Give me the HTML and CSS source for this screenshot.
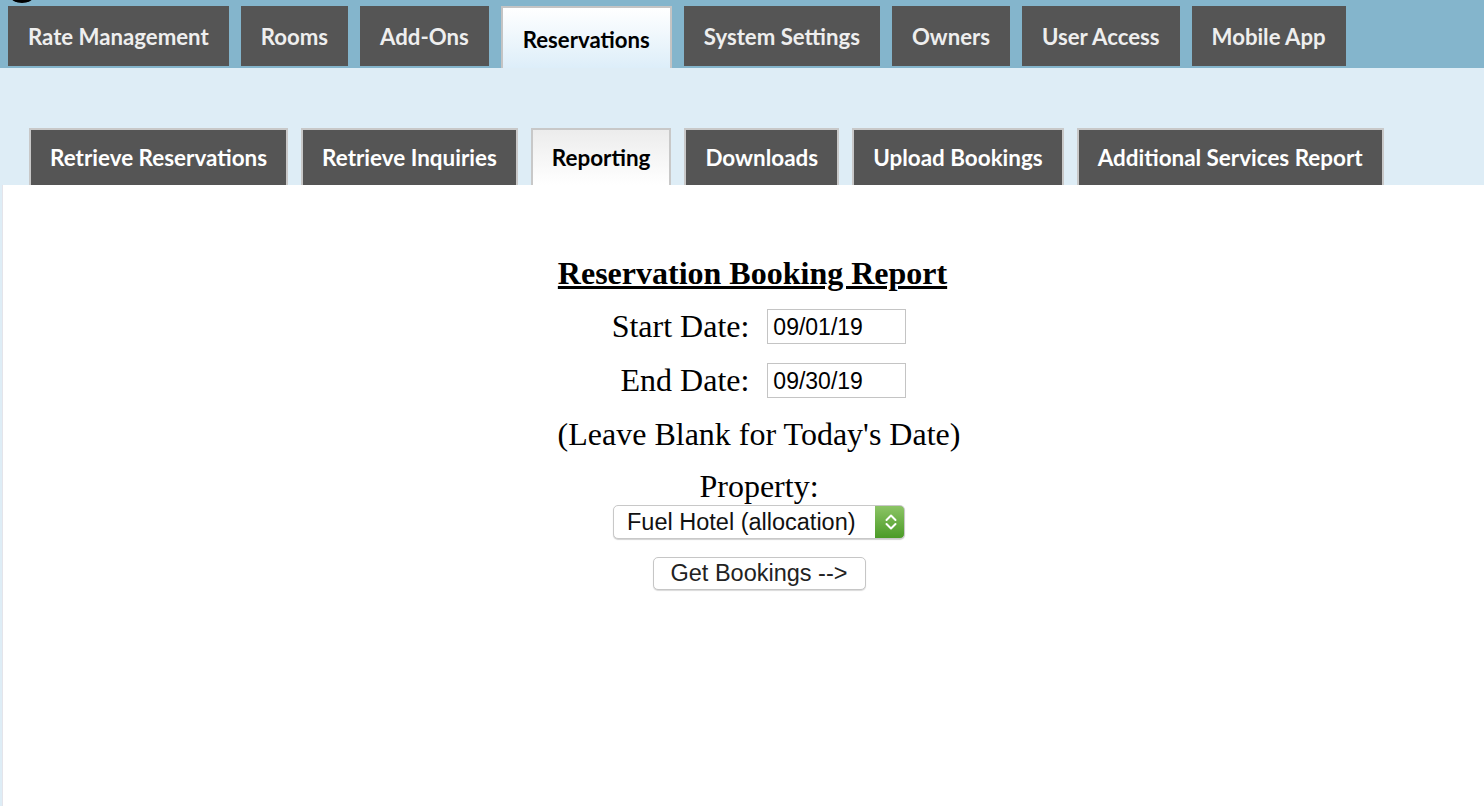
FILE: index.html
```html
<!DOCTYPE html>
<html lang="en">
<head>
    <meta charset="UTF-8">
    <meta name="viewport" content="width=device-width, initial-scale=1.0">
    <title>Reservation Booking Report</title>
    <link rel="stylesheet" href="styles.css">
</head>
<body>
    <div class="topbar">
        <svg class="logo-tail" width="30" height="6" viewBox="0 0 30 6"><ellipse cx="13" cy="-3" rx="11" ry="6" fill="#000"/></svg>
        <a href="#" class="tab">Rate Management</a>
        <a href="#" class="tab">Rooms</a>
        <a href="#" class="tab">Add-Ons</a>
        <a href="#" class="tab active">Reservations</a>
        <a href="#" class="tab">System Settings</a>
        <a href="#" class="tab">Owners</a>
        <a href="#" class="tab">User Access</a>
        <a href="#" class="tab">Mobile App</a>
    </div>

    <div class="subbar">
        <a href="#" class="subtab">Retrieve Reservations</a>
        <a href="#" class="subtab">Retrieve Inquiries</a>
        <a href="#" class="subtab active">Reporting</a>
        <a href="#" class="subtab">Downloads</a>
        <a href="#" class="subtab">Upload Bookings</a>
        <a href="#" class="subtab">Additional Services Report</a>
    </div>

    <div class="content">
        <form class="report">
            <h2 class="report-title">Reservation Booking Report</h2>
            <div class="dates">
                <label for="startDate">Start Date:</label>
                <input type="text" id="startDate" value="09/01/19">
                <label for="endDate">End Date:</label>
                <input type="text" id="endDate" value="09/30/19">
            </div>
            <p class="hint">(Leave Blank for Today's Date)</p>
            <p class="prop-label">Property:</p>
            <span class="select-wrap">
                <select id="property">
                    <option>Fuel Hotel (allocation)</option>
                </select>
                <svg class="select-arrows" width="14" height="22" viewBox="0 0 14 22"><path d="M2.5 9 L7 4.5 L11.5 9 M2.5 13 L7 17.5 L11.5 13" fill="none" stroke="#fff" stroke-width="2" stroke-linecap="round" stroke-linejoin="round"/></svg>
            </span>
            <button type="button" class="get-btn">Get Bookings --&gt;</button>
        </form>
    </div>
</body>
</html>
```

FILE: styles.css
```css
body {
    margin: 0;
    padding: 0;
    background-color: #deedf6;
    font-family: "Liberation Serif", "Times New Roman", serif;
}

a {
    text-decoration: none;
}

/* main tabs */
.topbar {
    position: relative;
    display: flex;
    align-items: flex-start;
    gap: 12px;
    height: 68px;
    padding: 6px 8px 0;
    box-sizing: border-box;
    background-color: #84b5cc;
}

.logo-tail {
    position: absolute;
    top: 0;
    left: 9px;
}

.tab {
    display: flex;
    align-items: center;
    height: 60px;
    padding: 0 20px;
    box-sizing: border-box;
    background-color: #555;
    color: #eee;
    font-family: Lato, "Open Sans", sans-serif;
    font-weight: 700;
    font-size: 22.2px;
}

.tab.active {
    height: 62px;
    border: 2px solid #c4c4c4;
    border-bottom: none;
    padding: 2px 20px 0;
    background: linear-gradient(#ffffff, #ddeef9);
    color: #000;
}

/* sub tabs */
.subbar {
    display: flex;
    align-items: flex-end;
    gap: 13px;
    padding: 60px 0 0 29px;
}

.subtab {
    display: flex;
    align-items: center;
    height: 57px;
    padding: 0 19px;
    box-sizing: border-box;
    border: 2px solid #c8c8c8;
    border-bottom: none;
    background-color: #555;
    color: #fff;
    font-family: Lato, "Open Sans", sans-serif;
    font-weight: 700;
    font-size: 22.45px;
}

.subtab.active {
    background: linear-gradient(#ececec, #ffffff);
    color: #000;
}

/* report form */
.content {
    margin-left: 2px;
    border-left: 1px solid #e4e4ea;
    background-color: #fff;
    min-height: 621px;
    padding: 70px 0 0 31px;
    box-sizing: border-box;
}

.report {
    display: flex;
    flex-direction: column;
    align-items: center;
}

.report-title {
    margin: 0 13px 0 0;
    font-size: 32px;
    line-height: 36px;
    font-weight: 700;
    text-decoration: underline;
}

.dates {
    display: grid;
    grid-template-columns: auto 139px;
    column-gap: 18px;
    row-gap: 19px;
    align-items: center;
    margin-top: 18px;
    font-size: 32px;
    line-height: 35px;
}

.dates label {
    text-align: right;
}

.dates input {
    display: block;
    height: 35px;
    box-sizing: border-box;
    border: 1px solid #c4c4c4;
    padding: 2px 5px 0;
    font-family: "Liberation Sans", Arial, sans-serif;
    font-size: 23px;
    color: #000;
}

.hint, .prop-label {
    margin: 18px 0 0;
    font-size: 32px;
    line-height: 36px;
}

.prop-label {
    margin-top: 16px;
}

.select-wrap {
    position: relative;
    margin-top: 1px;
}

.select-wrap select {
    display: block;
    appearance: none;
    -webkit-appearance: none;
    width: 292px;
    height: 34px;
    padding: 0 0 0 13px;
    border: 1px solid #c8c8c8;
    border-radius: 5px;
    box-shadow: 0 1px 1px rgba(0, 0, 0, 0.18);
    background: linear-gradient(#8cc466, #4b9b27) right / 29px 100% no-repeat, #fff;
    font-family: "Liberation Sans", Arial, sans-serif;
    font-size: 23.5px;
    color: #111;
}

.select-arrows {
    position: absolute;
    right: 7px;
    top: 6px;
    pointer-events: none;
}

.get-btn {
    margin-top: 18px;
    width: 213px;
    height: 33px;
    border: 1px solid #c6c6c6;
    border-radius: 5px;
    background-color: #fff;
    box-shadow: 0 1px 1px rgba(0, 0, 0, 0.15);
    font-family: "Liberation Sans", Arial, sans-serif;
    font-size: 23.5px;
    color: #222;
}
```
